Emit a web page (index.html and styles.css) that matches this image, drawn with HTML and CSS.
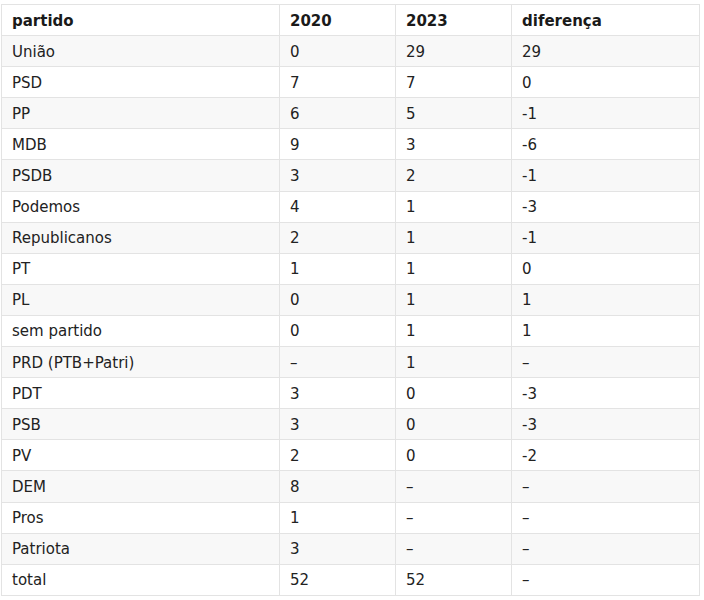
FILE: index.html
```html
<!DOCTYPE html>
<html lang="pt">
<head>
<meta charset="utf-8">
<link rel="stylesheet" href="styles.css">
</head>
<body>
<table class="tbl">
  <colgroup>
    <col class="c1"><col class="c2"><col class="c3"><col class="c4">
  </colgroup>
  <thead>
    <tr><th>partido</th><th>2020</th><th>2023</th><th>diferença</th></tr>
  </thead>
  <tbody>
    <tr><td>União</td><td>0</td><td>29</td><td>29</td></tr>
    <tr><td>PSD</td><td>7</td><td>7</td><td>0</td></tr>
    <tr><td>PP</td><td>6</td><td>5</td><td>-1</td></tr>
    <tr><td>MDB</td><td>9</td><td>3</td><td>-6</td></tr>
    <tr><td>PSDB</td><td>3</td><td>2</td><td>-1</td></tr>
    <tr><td>Podemos</td><td>4</td><td>1</td><td>-3</td></tr>
    <tr><td>Republicanos</td><td>2</td><td>1</td><td>-1</td></tr>
    <tr><td>PT</td><td>1</td><td>1</td><td>0</td></tr>
    <tr><td>PL</td><td>0</td><td>1</td><td>1</td></tr>
    <tr><td>sem partido</td><td>0</td><td>1</td><td>1</td></tr>
    <tr><td>PRD (PTB+Patri)</td><td>–</td><td>1</td><td>–</td></tr>
    <tr><td>PDT</td><td>3</td><td>0</td><td>-3</td></tr>
    <tr><td>PSB</td><td>3</td><td>0</td><td>-3</td></tr>
    <tr><td>PV</td><td>2</td><td>0</td><td>-2</td></tr>
    <tr><td>DEM</td><td>8</td><td>–</td><td>–</td></tr>
    <tr><td>Pros</td><td>1</td><td>–</td><td>–</td></tr>
    <tr><td>Patriota</td><td>3</td><td>–</td><td>–</td></tr>
    <tr><td>total</td><td>52</td><td>52</td><td>–</td></tr>
  </tbody>
</table>
</body>
</html>
```
FILE: styles.css
```css
html, body {
  margin: 0;
  padding: 0;
  background: #ffffff;
}
body {
  padding: 4px 0 0 1px;
  font-family: "DejaVu Sans", Verdana, sans-serif;
  font-size: 15px;
  color: #222222;
}
.tbl {
  border-collapse: collapse;
  width: 698px;
  table-layout: fixed;
}
.c1 { width: 278px; }
.c2 { width: 116px; }
.c3 { width: 116px; }
.c4 { width: 188px; }
.tbl th,
.tbl td {
  border: 1px solid #e3e3e3;
  height: 31.1px;
  padding: 1px 0 0 10px;
  text-align: left;
  vertical-align: middle;
  line-height: 18px;
  box-sizing: border-box;
}
.tbl th {
  font-weight: bold;
  color: #1a1a1a;
}
.tbl tbody tr:nth-child(odd) {
  background: #f8f8f8;
}
```
